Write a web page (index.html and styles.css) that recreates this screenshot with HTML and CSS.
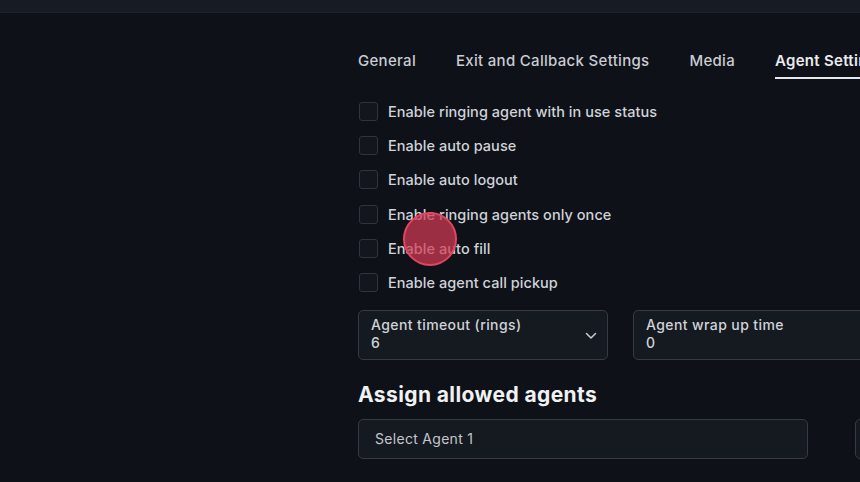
FILE: index.html
```html
<!DOCTYPE html>
<html>
<head>
<meta charset="utf-8">
<link rel="stylesheet" href="styles.css">
</head>
<body>
<div class="topbar"></div>
<div class="layout">
  <aside class="sidebar"></aside>
  <main class="content">
    <nav class="tabs">
      <div class="tab">General</div>
      <div class="tab">Exit and Callback Settings</div>
      <div class="tab">Media</div>
      <div class="tab active">Agent Settings</div>
    </nav>
    <div class="checks">
      <label class="check"><span class="box"></span>Enable ringing agent with in use status</label>
      <label class="check"><span class="box"></span>Enable auto pause</label>
      <label class="check"><span class="box"></span>Enable auto logout</label>
      <label class="check"><span class="box"></span>Enable ringing agents only once</label>
      <label class="check"><span class="box"></span>Enable auto fill</label>
      <label class="check"><span class="box"></span>Enable agent call pickup</label>
    </div>
    <div class="fields">
      <div class="field select">
        <div class="field-text">
          <div class="field-label">Agent timeout (rings)</div>
          <div class="field-value">6</div>
        </div>
        <svg class="chev" width="12" height="8" viewBox="0 0 12 8"><path d="M1.5 1.5 L6 6 L10.5 1.5" fill="none" stroke="#c9ccd2" stroke-width="1.5" stroke-linecap="round" stroke-linejoin="round"/></svg>
      </div>
      <div class="field wide">
        <div class="field-text">
          <div class="field-label">Agent wrap up time</div>
          <div class="field-value">0</div>
        </div>
      </div>
    </div>
    <h2 class="heading">Assign allowed agents</h2>
    <div class="agents">
      <div class="agent-select">Select Agent 1</div>
      <div class="agent-btn"></div>
    </div>
  </main>
</div>
<div class="click-dot"></div>
</body>
</html>
```
FILE: styles.css
```css
* { box-sizing: border-box; }
html, body {
  margin: 0;
  height: 100%;
  overflow: hidden;
  background: #0e1118;
  font-family: "Inter", "Noto Sans", sans-serif;
  color: #d2d5da;
}
.topbar {
  height: 13px;
  background: #171b23;
  border-bottom: 1px solid #1d222a;
}
.layout {
  display: grid;
  grid-template-columns: 358px 700px;
}
.content {
  display: flex;
  flex-direction: column;
}
.tabs {
  display: flex;
  gap: 40px;
  height: 66px;
  align-items: flex-end;
}
.tab {
  font-size: 15px;
  font-weight: 500;
  color: #c9ccd2;
  padding-bottom: 9px;
  white-space: nowrap;
  letter-spacing: 0.3px;
}
.tab.active {
  color: #e9ebee;
  font-weight: 600;
  border-bottom: 2px solid #e6e8eb;
  padding-bottom: 7px;
}
.checks {
  display: flex;
  flex-direction: column;
  padding-top: 15px;
}
.check {
  display: flex;
  align-items: center;
  height: 34.3px;
  font-size: 14.5px;
  font-weight: 500;
  color: #d0d3d8;
  white-space: nowrap;
  letter-spacing: 0.05px;
}
.box {
  width: 19px;
  height: 19px;
  border: 1.5px solid #30343c;
  border-radius: 3px;
  background: #13161d;
  margin: 0 10px 0 1px;
}
.fields {
  display: flex;
  gap: 25px;
  margin-top: 10px;
}
.field {
  height: 50px;
  border: 1.5px solid #363a42;
  border-radius: 5px;
  background: #151920;
  display: flex;
  align-items: center;
  padding: 0 12px;
}
.select { width: 250px; justify-content: space-between; padding-right: 10px; }
.wide { width: 300px; }
.field-text { margin-top: -2px; }
.field-label { font-size: 14px; font-weight: 500; color: #d0d3d8; line-height: 18px; letter-spacing: 0.4px; }
.field-value { font-size: 14px; font-weight: 500; color: #d0d3d8; line-height: 18px; }
.chev { margin-top: 2px; }
.heading {
  margin: 22px 0 12px;
  font-size: 21px;
  font-weight: 700;
  color: #f0f1f3;
  letter-spacing: 0.4px;
}
.agents {
  display: flex;
  gap: 47px;
}
.agent-select {
  width: 450px;
  height: 40px;
  border: 1.5px solid #363a42;
  border-radius: 5px;
  background: #151920;
  display: flex;
  align-items: center;
  padding-left: 16px;
  font-size: 14px;
  color: #c3c6cc;
  letter-spacing: 0.3px;
}
.agent-btn {
  width: 60px;
  height: 40px;
  border: 1.5px solid #363a42;
  border-radius: 5px;
  background: #151920;
}
.click-dot {
  position: absolute;
  left: 403px;
  top: 212px;
  width: 54px;
  height: 54px;
  border-radius: 50%;
  background: rgba(210, 58, 84, 0.72);
  border: 2px solid #e2455f;
}
```
